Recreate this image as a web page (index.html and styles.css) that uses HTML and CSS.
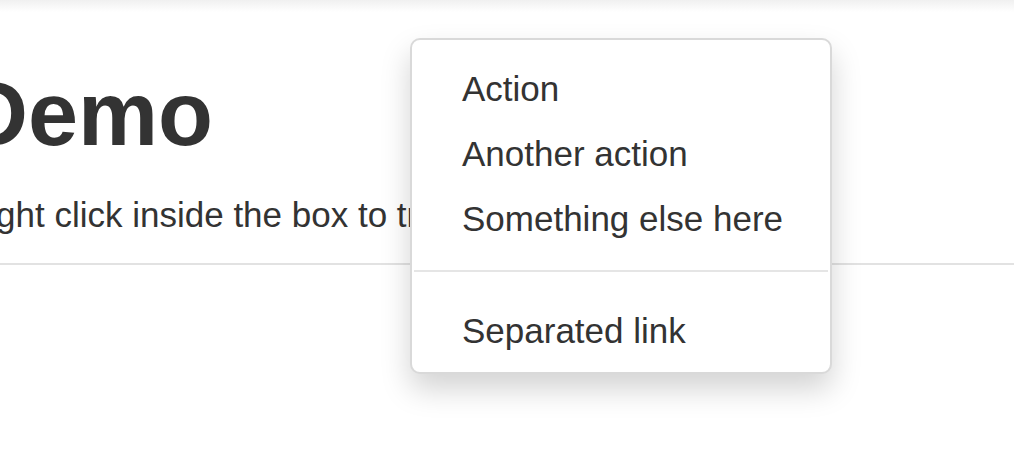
FILE: index.html
```html
<!DOCTYPE html>
<html lang="en">
<head>
<meta charset="utf-8">
<title>Demo</title>
<link rel="stylesheet" href="styles.css">
</head>
<body>
<div class="top-shadow"></div>
<main class="container">
  <h1 class="title">Demo</h1>
  <p class="lead">Right click inside the box to trigger the menu</p>
  <hr class="rule">
</main>
<ul class="dropdown-menu">
  <li><a class="item" href="#">Action</a></li>
  <li><a class="item" href="#">Another action</a></li>
  <li><a class="item" href="#">Something else here</a></li>
  <li class="divider"></li>
  <li><a class="item" href="#">Separated link</a></li>
</ul>
</body>
</html>
```
FILE: styles.css
```css
html, body {
  margin: 0;
  padding: 0;
  background: #fff;
  color: #333;
  font-family: "Liberation Sans", Arial, Helvetica, sans-serif;
  overflow: hidden;
}

.top-shadow {
  height: 12px;
  background: linear-gradient(to bottom, #f0f0f0, #ffffff);
}

.container {
  margin-left: -37px;
  width: 1200px;
  white-space: nowrap;
}

.title {
  margin: 53px 0 0 0;
  font-size: 90px;
  line-height: 99px;
  font-weight: bold;
}

.lead {
  margin: 26px 0 0 0;
  font-size: 35px;
  line-height: 50px;
}

.rule {
  margin: 23px 0 0 0;
  border: 0;
  border-top: 2px solid #e2e2e2;
  height: 0;
}

.dropdown-menu {
  position: absolute;
  top: 38px;
  left: 410px;
  width: 418px;
  margin: 0;
  padding: 12.5px 0;
  list-style: none;
  background: #fff;
  border: 2px solid rgba(0, 0, 0, 0.15);
  border-radius: 10px;
  box-shadow: 0 15px 30px rgba(0, 0, 0, 0.175);
}

.item {
  display: block;
  padding: 11px 50px 4px;
  font-size: 35px;
  line-height: 50px;
  color: #333;
  text-decoration: none;
  white-space: nowrap;
}

.divider {
  height: 2px;
  margin: 22.5px 2px;
  background: #e5e5e5;
}
```
